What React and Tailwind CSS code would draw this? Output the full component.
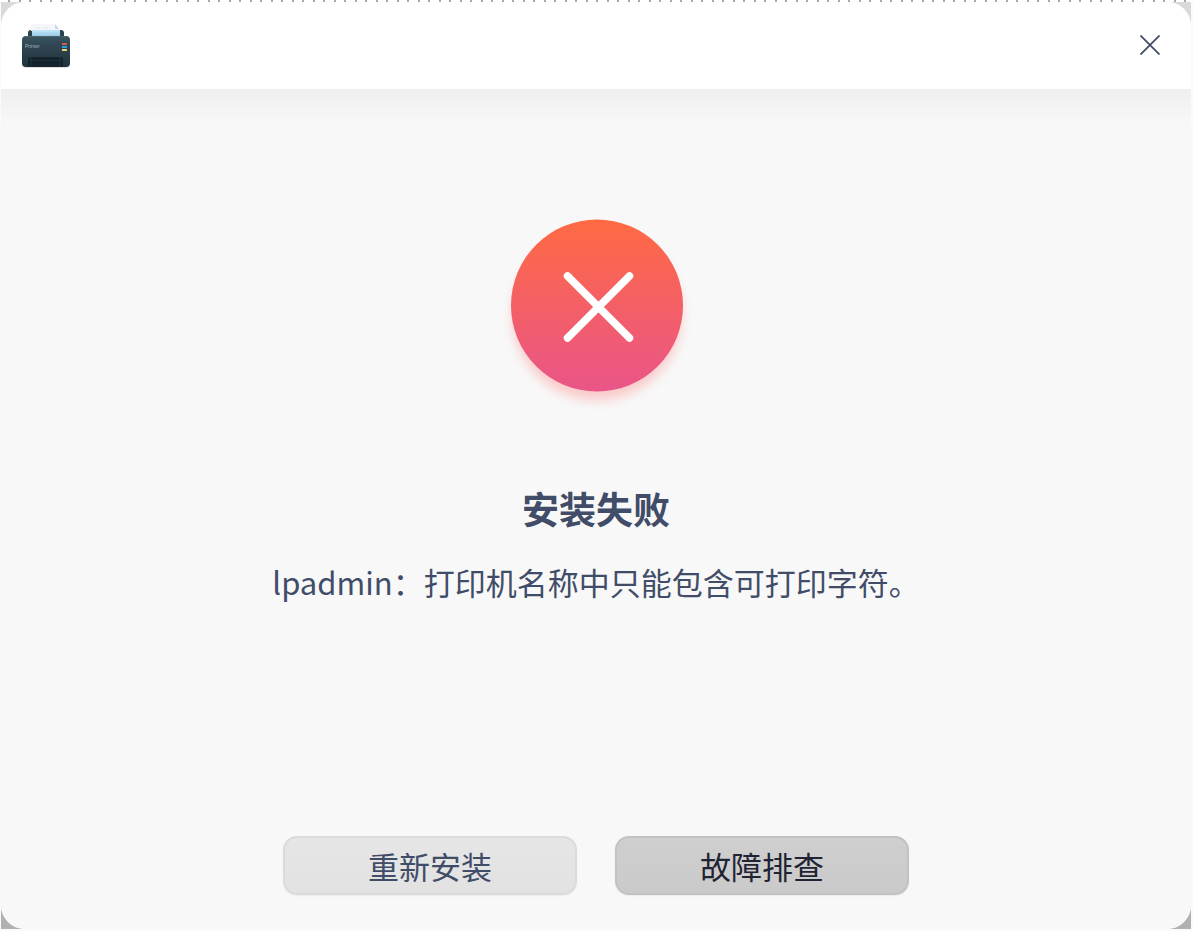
import React from 'react';

const PrinterIcon = () => (
  <svg viewBox="0 0 52 48" className="w-[52px] h-12" aria-hidden="true">
    <defs>
      <linearGradient id="printer-body" x1="0" y1="0" x2="0" y2="1">
        <stop offset="0" stopColor="#3a5460" />
        <stop offset="0.3" stopColor="#304652" />
        <stop offset="1" stopColor="#20323c" />
      </linearGradient>
      <linearGradient id="printer-paper" x1="0" y1="0" x2="0" y2="1">
        <stop offset="0" stopColor="#c4e7f8" />
        <stop offset="1" stopColor="#90c7e5" />
      </linearGradient>
    </defs>
    <rect x="2" y="17" width="48" height="30" rx="4" fill="#000" opacity="0.12" />
    <rect x="8" y="9" width="36" height="12" rx="3" fill="#2b424e" />
    <path d="M11 9V5q0-2 2-2h22l4 4v3H11z" fill="#f4f6f9" />
    <path d="M35 3l4 5h-3q-1 0-1-1z" fill="#ccd7e6" />
    <path d="M16 7h5M23 7h5" stroke="#e2e6ec" />
    <rect x="12" y="9" width="28" height="7" fill="url(#printer-paper)" />
    <path d="M17 12h14M33 12h2" stroke="#a8d6ed" />
    <rect x="2" y="15" width="48" height="31" rx="4" fill="url(#printer-body)" />
    <path d="M5 15.5h42" stroke="#48616d" />
    <rect x="8" y="36" width="35" height="10" rx="2" fill="#15242c" />
    <path d="M11 36v10M40 36v10" stroke="#20343e" />
    <path d="M11 39.5h29" stroke="#1c3039" />
    <text x="5" y="27" fontSize="5" fontFamily="Liberation Sans, sans-serif" fill="#a3b0b7">Printer</text>
    <rect x="42" y="22" width="5" height="2" rx="0.5" fill="#d65a52" />
    <rect x="42" y="25" width="5" height="2" rx="0.5" fill="#299ee9" />
    <rect x="42" y="28" width="5" height="2" rx="0.5" fill="#eed16e" />
  </svg>
);

const CloseIcon = () => (
  <svg viewBox="0 0 20 20" className="w-5 h-5" aria-hidden="true">
    <path d="M.5.5l19 19M19.5.5l-19 19" stroke="#414d68" strokeWidth="1.8" />
  </svg>
);

const FailureIcon = () => (
  <svg viewBox="0 0 212 212" className="w-[212px] h-[212px]" aria-hidden="true">
    <defs>
      <linearGradient id="failure-fill" x1="0" y1="0" x2="0" y2="1">
        <stop offset="0" stopColor="#ff6a43" />
        <stop offset="1" stopColor="#e95588" />
      </linearGradient>
      <filter id="failure-shadow" x="-20%" y="-20%" width="140%" height="140%">
        <feGaussianBlur stdDeviation="6" />
      </filter>
    </defs>
    <circle cx="107" cy="116" r="84" fill="#ff5a5a" opacity="0.3" filter="url(#failure-shadow)" />
    <circle cx="107" cy="105.5" r="86" fill="url(#failure-fill)" />
    <path d="M77.5 76l62 62M139.5 76l-62 62" stroke="#fff" strokeWidth="7.5" strokeLinecap="round" />
  </svg>
);

const ActionButton = ({ className, children }) => (
  <button
    type="button"
    className={`w-[294px] h-[59px] rounded-[14px] border-2 text-[31px] leading-10 shadow-xs ${className}`}
  >
    {children}
  </button>
);

const App = () => (
  <div className="min-h-screen flex flex-col pt-[2px] pr-[2px] pb-[2px] pl-px bg-[repeating-linear-gradient(90deg,#fff_0_8px,#a8a8a8_8px_10px,#fff_10px_19px,#a8a8a8_19px_21px)] font-['Noto_Sans_CJK_SC',sans-serif] text-[#414d68]">
    <div className="grow flex flex-col bg-linear-to-b from-[#dadada] to-[#b0b0b0] shadow-[-1px_0_0_#fafafa,2px_0_0_#fafafa,0_2px_0_#fafafa]">
      <div className="grow flex flex-col rounded-3xl overflow-hidden bg-[#f8f8f8]">
        <header className="h-[87px] shrink-0 flex items-center justify-between pl-[19px] pr-[31px] pb-[2px] bg-white">
          <PrinterIcon />
          <button type="button" aria-label="关闭">
            <CloseIcon />
          </button>
        </header>

        <main className="grow flex flex-col items-center justify-between pt-[111px] pb-[34px] bg-linear-to-b from-[#efefef] to-[#f8f8f8] to-[36px]">
          <section className="flex flex-col items-center text-center">
            <FailureIcon />
            <h1 className="mt-[70px] text-[37px] leading-[52px] font-bold">安装失败</h1>
            <p className="mt-6 text-[31px] leading-[48px]">lpadmin：打印机名称中只能包含可打印字符。</p>
          </section>

          <div className="flex flex-wrap justify-center gap-[38px]">
            <ActionButton className="border-[#dbdbdb] bg-linear-to-b from-[#e6e6e6] to-[#e2e2e2]">
              重新安装
            </ActionButton>
            <ActionButton className="border-[#c2c2c2] bg-linear-to-b from-[#cfcfcf] to-[#cacaca] text-[#1e2433]">
              故障排查
            </ActionButton>
          </div>
        </main>
      </div>
    </div>
  </div>
);

export default App;
